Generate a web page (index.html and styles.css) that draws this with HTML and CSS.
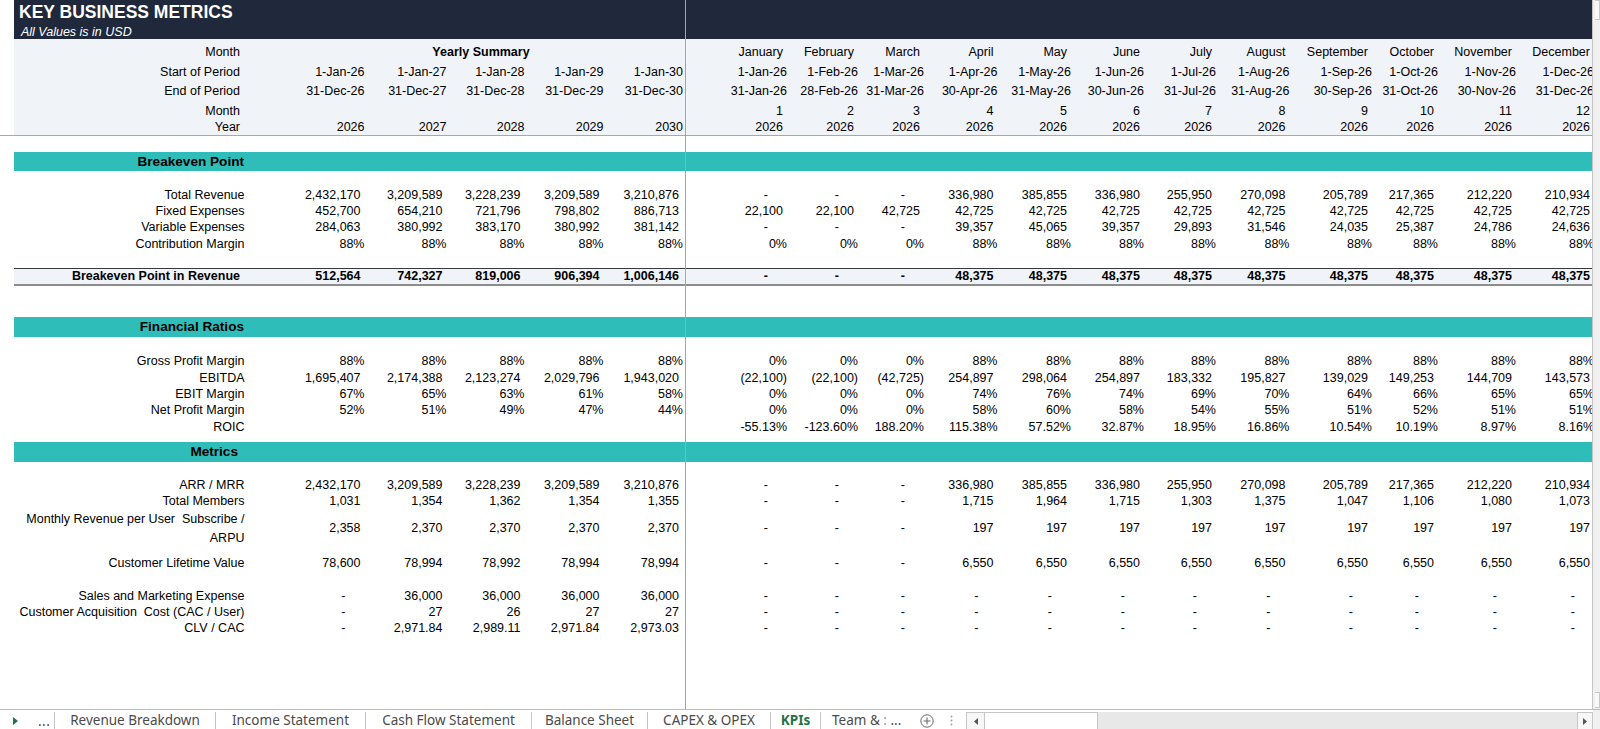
FILE: index.html
```html
<!DOCTYPE html>
<html>
<head>
<meta charset="utf-8">
<title>Key Business Metrics</title>
<link rel="stylesheet" href="styles.css">
</head>
<body>
<div class="app">
  <div class="main">
    <div class="sheet">
      <div class="titlebar">
        <div class="title">KEY BUSINESS METRICS</div>
        <div class="subtitle">All Values is in USD</div>
      </div>

      <div class="hdr">
        <div class="hdr-in">
          <div class="row hr1">
            <span class="hl">Month</span><span class="ys">Yearly Summary</span>
            <span class="hn">January</span><span class="hn">February</span><span class="hn">March</span><span class="hn">April</span><span class="hn">May</span><span class="hn">June</span><span class="hn">July</span><span class="hn">August</span><span class="hn">September</span><span class="hn">October</span><span class="hn">November</span><span class="hn">December</span>
          </div>
          <div class="row hr2">
            <span class="hl">Start of Period</span>
            <span class="p">1-Jan-26</span><span class="p">1-Jan-27</span><span class="p">1-Jan-28</span><span class="p">1-Jan-29</span><span class="p">1-Jan-30</span>
            <span class="p">1-Jan-26</span><span class="p">1-Feb-26</span><span class="p">1-Mar-26</span><span class="p">1-Apr-26</span><span class="p">1-May-26</span><span class="p">1-Jun-26</span><span class="p">1-Jul-26</span><span class="p">1-Aug-26</span><span class="p">1-Sep-26</span><span class="p">1-Oct-26</span><span class="p">1-Nov-26</span><span class="p">1-Dec-26</span>
          </div>
          <div class="row hr3">
            <span class="hl">End of Period</span>
            <span class="p">31-Dec-26</span><span class="p">31-Dec-27</span><span class="p">31-Dec-28</span><span class="p">31-Dec-29</span><span class="p">31-Dec-30</span>
            <span class="p">31-Jan-26</span><span class="p">28-Feb-26</span><span class="p">31-Mar-26</span><span class="p">30-Apr-26</span><span class="p">31-May-26</span><span class="p">30-Jun-26</span><span class="p">31-Jul-26</span><span class="p">31-Aug-26</span><span class="p">30-Sep-26</span><span class="p">31-Oct-26</span><span class="p">30-Nov-26</span><span class="p">31-Dec-26</span>
          </div>
          <div class="row hr4">
            <span class="hl">Month</span>
            <span class="e"></span><span class="e"></span><span class="e"></span><span class="e"></span><span class="e"></span>
            <span class="hn">1</span><span class="hn">2</span><span class="hn">3</span><span class="hn">4</span><span class="hn">5</span><span class="hn">6</span><span class="hn">7</span><span class="hn">8</span><span class="hn">9</span><span class="hn">10</span><span class="hn">11</span><span class="hn">12</span>
          </div>
          <div class="row hr5">
            <span class="hl">Year</span>
            <span class="p">2026</span><span class="p">2027</span><span class="p">2028</span><span class="p">2029</span><span class="p">2030</span>
            <span class="hn">2026</span><span class="hn">2026</span><span class="hn">2026</span><span class="hn">2026</span><span class="hn">2026</span><span class="hn">2026</span><span class="hn">2026</span><span class="hn">2026</span><span class="hn">2026</span><span class="hn">2026</span><span class="hn">2026</span><span class="hn">2026</span>
          </div>
        </div>
      </div>

      <div class="body">
        <div class="band band-1"><span class="bt">Breakeven Point</span></div>

        <div class="blk blk-1">
          <div class="row r">
            <span class="lb">Total Revenue</span>
            <span class="n">2,432,170</span><span class="n">3,209,589</span><span class="n">3,228,239</span><span class="n">3,209,589</span><span class="n">3,210,876</span>
            <span class="d">-</span><span class="d">-</span><span class="d">-</span><span class="n">336,980</span><span class="n">385,855</span><span class="n">336,980</span><span class="n">255,950</span><span class="n">270,098</span><span class="n">205,789</span><span class="n">217,365</span><span class="n">212,220</span><span class="n">210,934</span>
          </div>
          <div class="row r">
            <span class="lb">Fixed Expenses</span>
            <span class="n">452,700</span><span class="n">654,210</span><span class="n">721,796</span><span class="n">798,802</span><span class="n">886,713</span>
            <span class="n">22,100</span><span class="n">22,100</span><span class="n">42,725</span><span class="n">42,725</span><span class="n">42,725</span><span class="n">42,725</span><span class="n">42,725</span><span class="n">42,725</span><span class="n">42,725</span><span class="n">42,725</span><span class="n">42,725</span><span class="n">42,725</span>
          </div>
          <div class="row r">
            <span class="lb">Variable Expenses</span>
            <span class="n">284,063</span><span class="n">380,992</span><span class="n">383,170</span><span class="n">380,992</span><span class="n">381,142</span>
            <span class="d">-</span><span class="d">-</span><span class="d">-</span><span class="n">39,357</span><span class="n">45,065</span><span class="n">39,357</span><span class="n">29,893</span><span class="n">31,546</span><span class="n">24,035</span><span class="n">25,387</span><span class="n">24,786</span><span class="n">24,636</span>
          </div>
          <div class="row r">
            <span class="lb">Contribution Margin</span>
            <span class="p">88%</span><span class="p">88%</span><span class="p">88%</span><span class="p">88%</span><span class="p">88%</span>
            <span class="p">0%</span><span class="p">0%</span><span class="p">0%</span><span class="p">88%</span><span class="p">88%</span><span class="p">88%</span><span class="p">88%</span><span class="p">88%</span><span class="p">88%</span><span class="p">88%</span><span class="p">88%</span><span class="p">88%</span>
          </div>
        </div>

        <div class="total">
          <div class="row tr">
            <span class="tl">Breakeven Point in Revenue</span>
            <span class="n">512,564</span><span class="n">742,327</span><span class="n">819,006</span><span class="n">906,394</span><span class="n">1,006,146</span>
            <span class="d">-</span><span class="d">-</span><span class="d">-</span><span class="n">48,375</span><span class="n">48,375</span><span class="n">48,375</span><span class="n">48,375</span><span class="n">48,375</span><span class="n">48,375</span><span class="n">48,375</span><span class="n">48,375</span><span class="n">48,375</span>
          </div>
        </div>

        <div class="band band-2"><span class="bt">Financial Ratios</span></div>

        <div class="blk blk-2">
          <div class="row r">
            <span class="lb">Gross Profit Margin</span>
            <span class="p">88%</span><span class="p">88%</span><span class="p">88%</span><span class="p">88%</span><span class="p">88%</span>
            <span class="p">0%</span><span class="p">0%</span><span class="p">0%</span><span class="p">88%</span><span class="p">88%</span><span class="p">88%</span><span class="p">88%</span><span class="p">88%</span><span class="p">88%</span><span class="p">88%</span><span class="p">88%</span><span class="p">88%</span>
          </div>
          <div class="row r">
            <span class="lb">EBITDA</span>
            <span class="n">1,695,407</span><span class="n">2,174,388</span><span class="n">2,123,274</span><span class="n">2,029,796</span><span class="n">1,943,020</span>
            <span class="p">(22,100)</span><span class="p">(22,100)</span><span class="p">(42,725)</span><span class="n">254,897</span><span class="n">298,064</span><span class="n">254,897</span><span class="n">183,332</span><span class="n">195,827</span><span class="n">139,029</span><span class="n">149,253</span><span class="n">144,709</span><span class="n">143,573</span>
          </div>
          <div class="row r">
            <span class="lb">EBIT Margin</span>
            <span class="p">67%</span><span class="p">65%</span><span class="p">63%</span><span class="p">61%</span><span class="p">58%</span>
            <span class="p">0%</span><span class="p">0%</span><span class="p">0%</span><span class="p">74%</span><span class="p">76%</span><span class="p">74%</span><span class="p">69%</span><span class="p">70%</span><span class="p">64%</span><span class="p">66%</span><span class="p">65%</span><span class="p">65%</span>
          </div>
          <div class="row r">
            <span class="lb">Net Profit Margin</span>
            <span class="p">52%</span><span class="p">51%</span><span class="p">49%</span><span class="p">47%</span><span class="p">44%</span>
            <span class="p">0%</span><span class="p">0%</span><span class="p">0%</span><span class="p">58%</span><span class="p">60%</span><span class="p">58%</span><span class="p">54%</span><span class="p">55%</span><span class="p">51%</span><span class="p">52%</span><span class="p">51%</span><span class="p">51%</span>
          </div>
          <div class="row r">
            <span class="lb">ROIC</span>
            <span class="e"></span><span class="e"></span><span class="e"></span><span class="e"></span><span class="e"></span>
            <span class="p">-55.13%</span><span class="p">-123.60%</span><span class="p">188.20%</span><span class="p">115.38%</span><span class="p">57.52%</span><span class="p">32.87%</span><span class="p">18.95%</span><span class="p">16.86%</span><span class="p">10.54%</span><span class="p">10.19%</span><span class="p">8.97%</span><span class="p">8.16%</span>
          </div>
        </div>

        <div class="band band-3"><span class="bt bt-m">Metrics</span></div>

        <div class="blk blk-3">
          <div class="row r">
            <span class="lb">ARR / MRR</span>
            <span class="n">2,432,170</span><span class="n">3,209,589</span><span class="n">3,228,239</span><span class="n">3,209,589</span><span class="n">3,210,876</span>
            <span class="d">-</span><span class="d">-</span><span class="d">-</span><span class="n">336,980</span><span class="n">385,855</span><span class="n">336,980</span><span class="n">255,950</span><span class="n">270,098</span><span class="n">205,789</span><span class="n">217,365</span><span class="n">212,220</span><span class="n">210,934</span>
          </div>
          <div class="row r">
            <span class="lb">Total Members</span>
            <span class="n">1,031</span><span class="n">1,354</span><span class="n">1,362</span><span class="n">1,354</span><span class="n">1,355</span>
            <span class="d">-</span><span class="d">-</span><span class="d">-</span><span class="n">1,715</span><span class="n">1,964</span><span class="n">1,715</span><span class="n">1,303</span><span class="n">1,375</span><span class="n">1,047</span><span class="n">1,106</span><span class="n">1,080</span><span class="n">1,073</span>
          </div>
          <div class="row tall">
            <span class="lb2">Monthly Revenue per User &nbsp;Subscribe /<br>ARPU</span>
            <span class="n">2,358</span><span class="n">2,370</span><span class="n">2,370</span><span class="n">2,370</span><span class="n">2,370</span>
            <span class="d">-</span><span class="d">-</span><span class="d">-</span><span class="n">197</span><span class="n">197</span><span class="n">197</span><span class="n">197</span><span class="n">197</span><span class="n">197</span><span class="n">197</span><span class="n">197</span><span class="n">197</span>
          </div>
          <div class="row r clv">
            <span class="lb">Customer Lifetime Value</span>
            <span class="n">78,600</span><span class="n">78,994</span><span class="n">78,992</span><span class="n">78,994</span><span class="n">78,994</span>
            <span class="d">-</span><span class="d">-</span><span class="d">-</span><span class="n">6,550</span><span class="n">6,550</span><span class="n">6,550</span><span class="n">6,550</span><span class="n">6,550</span><span class="n">6,550</span><span class="n">6,550</span><span class="n">6,550</span><span class="n">6,550</span>
          </div>
          <div class="row r sme">
            <span class="lb">Sales and Marketing Expense</span>
            <span class="d">-</span><span class="n">36,000</span><span class="n">36,000</span><span class="n">36,000</span><span class="n">36,000</span>
            <span class="d">-</span><span class="d">-</span><span class="d">-</span><span class="d">-</span><span class="d">-</span><span class="d">-</span><span class="d">-</span><span class="d">-</span><span class="d">-</span><span class="d">-</span><span class="d">-</span><span class="d">-</span>
          </div>
          <div class="row r">
            <span class="lb">Customer Acquisition &nbsp;Cost (CAC / User)</span>
            <span class="d">-</span><span class="n">27</span><span class="n">26</span><span class="n">27</span><span class="n">27</span>
            <span class="d">-</span><span class="d">-</span><span class="d">-</span><span class="d">-</span><span class="d">-</span><span class="d">-</span><span class="d">-</span><span class="d">-</span><span class="d">-</span><span class="d">-</span><span class="d">-</span><span class="d">-</span>
          </div>
          <div class="row r">
            <span class="lb">CLV / CAC</span>
            <span class="d">-</span><span class="n">2,971.84</span><span class="n">2,989.11</span><span class="n">2,971.84</span><span class="n">2,973.03</span>
            <span class="d">-</span><span class="d">-</span><span class="d">-</span><span class="d">-</span><span class="d">-</span><span class="d">-</span><span class="d">-</span><span class="d">-</span><span class="d">-</span><span class="d">-</span><span class="d">-</span><span class="d">-</span>
          </div>
        </div>
      </div>

      <div class="freeze"></div>
    </div>
    <div class="vscroll">
      <div class="vbtn"></div>
      <div class="vbtn vbtn-b"></div>
    </div>
  </div>

  <div class="tabbar">
    <div class="nav">
      <svg class="tri" width="5" height="8" viewBox="0 0 5 8"><path d="M0 0 L5 4 L0 8 Z" fill="#217346"/></svg>
      <span class="more">...</span>
    </div>
    <div class="tab t-rev">Revenue Breakdown</div>
    <div class="tab t-inc">Income Statement</div>
    <div class="tab t-cash">Cash Flow Statement</div>
    <div class="tab t-bal">Balance Sheet</div>
    <div class="tab t-cap">CAPEX &amp; OPEX</div>
    <div class="tab t-kpi">KPIs</div>
    <div class="tab t-team"><span>Team &amp;&nbsp;</span><span class="cut">:</span><span>&nbsp;...</span></div>
    <div class="add">
      <svg width="14" height="14" viewBox="0 0 14 14"><circle cx="7" cy="7" r="6.2" fill="none" stroke="#6b6b6b" stroke-width="1"/><path d="M7 3.5 V10.5 M3.5 7 H10.5" stroke="#6b6b6b" stroke-width="1.1"/></svg>
    </div>
    <div class="vsplit">
      <svg width="3" height="11" viewBox="0 0 3 11"><circle cx="1.5" cy="1.5" r="0.9" fill="#9a9a9a"/><circle cx="1.5" cy="5.5" r="0.9" fill="#9a9a9a"/><circle cx="1.5" cy="9.5" r="0.9" fill="#9a9a9a"/></svg>
    </div>
    <div class="hscroll">
      <div class="hs-btn hs-l"><svg width="4" height="7" viewBox="0 0 4 7"><path d="M4 0 L0 3.5 L4 7 Z" fill="#555"/></svg></div>
      <div class="thumb"></div>
      <div class="track"></div>
      <div class="hs-btn hs-r"><svg width="4" height="7" viewBox="0 0 4 7"><path d="M0 0 L4 3.5 L0 7 Z" fill="#555"/></svg></div>
    </div>
    <div class="corner"></div>
  </div>
</div>
</body>
</html>
```

FILE: styles.css
```css
* { box-sizing: border-box; margin: 0; padding: 0; }

body {
  margin: 0;
  width: 1600px;
  height: 729px;
  overflow: hidden;
  background: #fff;
  color: #000;
  font-family: "Liberation Sans", Arial, sans-serif;
  font-size: 12.5px;
}

.app { display: flex; flex-direction: column; width: 1600px; height: 729px; }

.main { display: flex; height: 710px; }

.sheet {
  position: relative;
  width: 1593px;
  height: 710px;
  overflow: hidden;
  border-right: 1px solid #c4c4c4;
  border-bottom: 1px solid #bcbcbc;
}

/* ---------- title ---------- */
.titlebar {
  margin-left: 14px;
  height: 39px;
  background: #1f293b;
  color: #fff;
}
.title {
  height: 22px;
  line-height: 24px;
  padding-left: 5px;
  font-size: 17.5px;
  font-weight: bold;
}
.subtitle {
  height: 17px;
  line-height: 20px;
  padding-left: 7px;
  font-size: 12.5px;
  font-style: italic;
}

/* ---------- grid rows ---------- */
.row {
  display: grid;
  grid-template-columns: 234px 118.5px 82px 78px 79px 79.5px 104px 71px 66px 73.5px 73.5px 73px 72px 73.5px 82.5px 66px 78px 78px;
  align-items: center;
  white-space: nowrap;
}
.row > span { text-align: right; white-space: nowrap; }

.n  { padding-right: 6px; }
.p  { padding-right: 2px; }
.d  { padding-right: 21px; }
.hn { padding-right: 6px; }
.hl { padding-right: 8px; }

.lb {
  display: flex;
  justify-content: flex-end;
  padding-right: 3.5px;
}
.lb2 {
  white-space: normal !important;
  line-height: 19px;
  padding-right: 3.5px;
}

/* ---------- header block ---------- */
.hdr { border-bottom: 1px solid #a9a9a9; }
.hdr-in {
  margin-left: 14px;
  padding-top: 4px;
  background: #f0f3f8;
}
.hr1, .hr2, .hr3 { height: 19.5px; line-height: 19.5px; }
.hr4 { height: 18px; line-height: 18px; }
.hr5 { height: 15px; line-height: 15px; }
.ys {
  grid-column: 2 / 7;
  text-align: center !important;
  padding-left: 29px;
  font-weight: bold;
}

/* ---------- body ---------- */
.body { padding-left: 14px; }

.band {
  display: grid;
  grid-template-columns: 234px;
  align-items: center;
  background: #2fbdb9;
  font-weight: bold;
  font-size: 13.6px;
}
.bt { text-align: right; padding-right: 4px; white-space: nowrap; }
.bt-m { padding-right: 10px; }

.band-1 { margin-top: 16.5px; height: 19px; }
.band-2 { margin-top: 30.7px; height: 20px; }
.band-3 { margin-top: 7px; height: 20px; }

.blk-1 { margin-top: 15.85px; }
.blk-2 { margin-top: 16.5px; }
.blk-3 { margin-top: 14.85px; }

.r { height: 16.3px; line-height: 16.3px; }
.tall { height: 39px; line-height: 39px; }
.clv { margin-top: 6.7px; }
.sme { margin-top: 16.4px; }

.total {
  margin-top: 16.25px;
  height: 18px;
  border-top: 1px solid #3a3a3a;
  border-bottom: 2px solid #8c8c8c;
  background: #f0f3f8;
  font-weight: bold;
}
.tr { height: 15px; line-height: 15px; }
.tl { padding-right: 8px; }

.freeze {
  position: absolute;
  left: 685px;
  top: 0;
  bottom: 0;
  width: 1px;
  background: #a6a6a6;
}

/* ---------- vertical scrollbar sliver ---------- */
.vscroll {
  width: 7px;
  height: 710px;
  background: #f0f0f0;
  display: flex;
  flex-direction: column;
  justify-content: space-between;
  border-bottom: 1px solid #bcbcbc;
}
.vbtn {
  height: 20px;
  background: #f8f8f8;
  border: 1px solid #c8c8c8;
  border-left: none;
  margin-left: 2px;
}
.vbtn-b { height: 16px; margin-bottom: 1px; }

/* ---------- sheet tabs ---------- */
.tabbar {
  display: flex;
  height: 19px;
  background: #fff;
  font-family: "Noto Sans", "Open Sans", sans-serif;
  font-size: 13.5px;
  color: #4a4a4a;
}
.nav {
  width: 55px;
  display: flex;
  align-items: center;
  border-right: 1px solid #c6c6c6;
  margin-top: 2px;
}
.tri { margin-left: 13px; margin-top: 1px; }
.more { margin-left: 20px; letter-spacing: 0.5px; }

.tab {
  margin-top: 2px;
  display: flex;
  align-items: center;
  justify-content: center;
  border-right: 1px solid #c6c6c6;
  line-height: 17px;
  white-space: pre;
}
.t-rev  { width: 161px; }
.t-inc  { width: 150px; }
.t-cash { width: 166px; }
.t-bal  { width: 116px; }
.t-cap  { width: 123px; }
.t-kpi  { width: 50px; font-weight: bold; color: #217346; background: #fff; }
.t-team { width: 97px; border-right: none; justify-content: flex-start; padding-left: 11px; }
.cut { color: #9a9a9a; }

.add {
  width: 18px;
  display: flex;
  align-items: center;
  justify-content: center;
  margin-top: 2px;
}
.vsplit {
  width: 30px;
  display: flex;
  align-items: center;
  justify-content: center;
  margin-top: 2px;
}
.hscroll {
  flex: 1;
  display: flex;
  margin-top: 2px;
}
.hs-btn {
  display: flex;
  align-items: center;
  justify-content: center;
  background: #f7f7f7;
  border: 1px solid #c6c6c6;
  border-bottom: none;
}
.hs-l { width: 18px; border-right: none; }
.hs-r { width: 16px; }
.thumb {
  width: 114px;
  background: #fff;
  border: 1px solid #c6c6c6;
  border-bottom: none;
}
.track { flex: 1; background: #e8e8e8; }
.corner { width: 7px; background: #f0f0f0; }
```
